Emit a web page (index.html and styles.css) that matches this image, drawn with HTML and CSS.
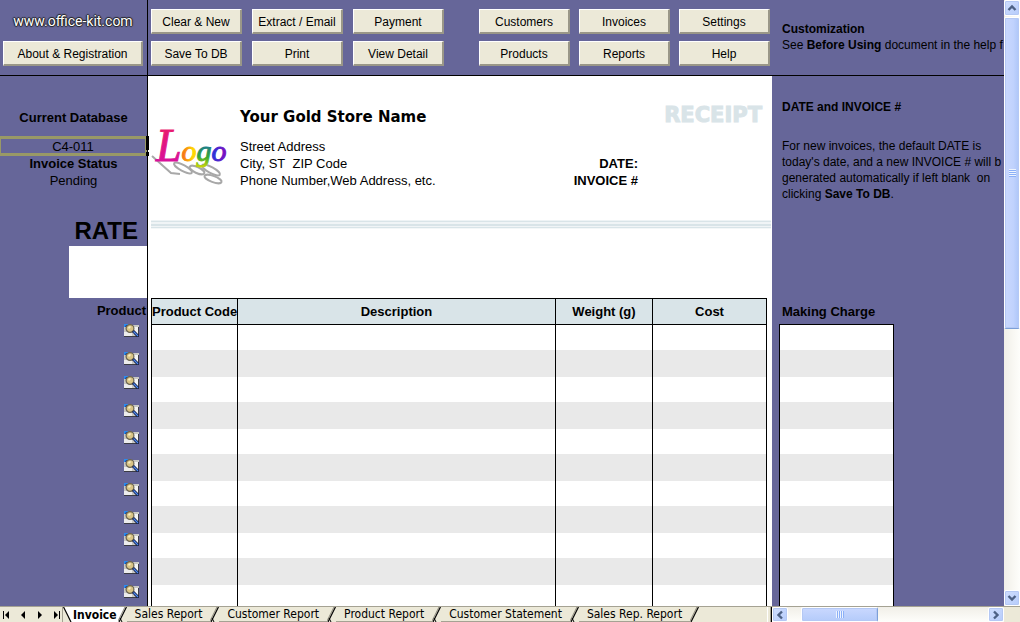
FILE: index.html
```html
<!DOCTYPE html>
<html lang="en">
<head>
<meta charset="utf-8">
<title>Invoice</title>
<link rel="stylesheet" href="styles.css">
</head>
<body>
<svg class="defs" width="0" height="0" aria-hidden="true">
  <symbol id="lookup" viewBox="0 0 15 13">
    <rect x="0" y="1" width="15" height="12" fill="#c8c8c4"/>
    <path d="M0 8h8v5H0z" fill="#ececec"/>
    <path d="M9 3h5v7H9z" fill="#f4f4f4"/>
    <path d="M0 12.500h15M14.500 3v10" stroke="#3c3c44" fill="none"/>
    <path d="M0 0h4v1H2v2H0z" fill="#2a8cf0"/>
    <path d="M2 1h2v2H1z" fill="#123a9a"/>
    <circle cx="6" cy="4.500" r="3.900" fill="#d9c486" stroke="#6a6452" stroke-width="1.200"/>
    <path d="M4 3.500l2-1.500 1 1-2 2z" fill="#f7edc4"/>
    <path d="M9 7l5.500 5.500" stroke="#101840" stroke-width="3"/>
    <path d="M9.500 7.500l4.500 4.500" stroke="#4d8cf0" stroke-width="1.200"/>
  </symbol>
  <symbol id="slash" viewBox="0 0 9 15">
    <path d="M8.500 0L1 15h8V0z" fill="#ece9d8"/>
    <path d="M7 0L0 14" stroke="#8d8a7c" fill="none"/>
    <path d="M8.500 0L1 15" stroke="#000" stroke-width="1.200" fill="none"/>
    <path d="M2 11L4 15" stroke="#000" fill="none"/>
  </symbol>
  <symbol id="chevron" viewBox="0 0 10 10">
    <path d="M1.500 7L5 3.500 8.500 7" fill="none" stroke="#4d6185" stroke-width="2.400"/>
  </symbol>
</svg>

<div class="app">
  <main class="sheet">
    <header class="toolbar">
      <div class="brand">
        <a class="brand-link" href="#">www.office-kit.com</a>
        <button class="btn">About &amp; Registration</button>
      </div>
      <div class="actions">
        <div class="group">
          <button class="btn">Clear &amp; New</button><button class="btn">Extract / Email</button><button class="btn">Payment</button>
          <button class="btn">Save To DB</button><button class="btn">Print</button><button class="btn">View Detail</button>
        </div>
        <div class="group group-nav">
          <button class="btn">Customers</button><button class="btn">Invoices</button><button class="btn">Settings</button>
          <button class="btn">Products</button><button class="btn">Reports</button><button class="btn">Help</button>
        </div>
      </div>
      <div class="hint">
        <b>Customization</b>
        <p>See <b>Before Using</b> document in the help f</p>
      </div>
    </header>

    <div class="content">
      <aside class="side">
        <label class="side-title" for="db">Current Database</label>
        <div class="selected"><input id="db" type="text" value="C4-011"><span class="handle"></span></div>
        <b class="side-title">Invoice Status</b>
        <span class="side-value">Pending</span>
        <label class="rate-label" for="rate">RATE</label>
        <input id="rate" class="rate" type="text">
        <b class="product">Product</b>
        <ul class="lookups">
          <li><button aria-label="Look up product"><svg><use href="#lookup"/></svg></button></li>
          <li><button aria-label="Look up product"><svg><use href="#lookup"/></svg></button></li>
          <li><button aria-label="Look up product"><svg><use href="#lookup"/></svg></button></li>
          <li><button aria-label="Look up product"><svg><use href="#lookup"/></svg></button></li>
          <li><button aria-label="Look up product"><svg><use href="#lookup"/></svg></button></li>
          <li><button aria-label="Look up product"><svg><use href="#lookup"/></svg></button></li>
          <li><button aria-label="Look up product"><svg><use href="#lookup"/></svg></button></li>
          <li><button aria-label="Look up product"><svg><use href="#lookup"/></svg></button></li>
          <li><button aria-label="Look up product"><svg><use href="#lookup"/></svg></button></li>
          <li><button aria-label="Look up product"><svg><use href="#lookup"/></svg></button></li>
          <li><button aria-label="Look up product"><svg><use href="#lookup"/></svg></button></li>
        </ul>
      </aside>

      <section class="invoice">
        <div class="invoice-head">
          <svg class="logo" viewBox="0 0 78 80" role="img" aria-label="Logo">
            <defs>
              <linearGradient id="gl" gradientUnits="userSpaceOnUse" x1="0" y1="8" x2="0" y2="54"><stop offset="0" stop-color="#f0205a"/><stop offset="1" stop-color="#d8109a"/></linearGradient>
              <linearGradient id="go" gradientUnits="userSpaceOnUse" x1="26" y1="0" x2="42" y2="0"><stop offset="0" stop-color="#f03a20"/><stop offset="1" stop-color="#ffd800"/></linearGradient>
              <linearGradient id="gg" gradientUnits="userSpaceOnUse" x1="0" y1="38" x2="0" y2="62"><stop offset="0" stop-color="#1a7898"/><stop offset=".5" stop-color="#35a830"/><stop offset="1" stop-color="#e8e000"/></linearGradient>
              <linearGradient id="gb" gradientUnits="userSpaceOnUse" x1="58" y1="0" x2="74" y2="0"><stop offset="0" stop-color="#1040e0"/><stop offset="1" stop-color="#7a10c0"/></linearGradient>
            </defs>
            <g fill="none" stroke="#a8a8a8" stroke-width="2">
              <path d="M1 49L20 66l9 1"/>
              <ellipse cx="32" cy="61" rx="10" ry="3" transform="rotate(28 32 61)"/>
              <ellipse cx="46" cy="63" rx="8" ry="3" transform="rotate(25 46 63)"/>
              <ellipse cx="60" cy="63" rx="10" ry="3" transform="rotate(28 60 63)"/>
              <ellipse cx="62" cy="72" rx="9" ry="3" transform="rotate(20 62 72)"/>
            </g>
            <text class="logo-text" x="5" y="54"><tspan class="logo-l" fill="url(#gl)" stroke="url(#gl)">L</tspan><tspan fill="url(#go)" stroke="url(#go)">o</tspan><tspan fill="url(#gg)" stroke="url(#gg)">g</tspan><tspan fill="url(#gb)" stroke="url(#gb)">o</tspan></text>
          </svg>
          <div class="store">
            <h1>Your Gold Store Name</h1>
            <p>Street Address<br>City, ST&nbsp; ZIP Code<br>Phone Number,Web Address, etc.</p>
          </div>
          <div class="meta">
            <h2>RECEIPT</h2>
            <p>DATE:<br>INVOICE #</p>
          </div>
        </div>
        <div class="rule"></div>
        <table class="items">
          <colgroup><col class="c-code"><col class="c-desc"><col class="c-weight"><col class="c-cost"></colgroup>
          <thead><tr><th>Product Code</th><th>Description</th><th>Weight (g)</th><th>Cost</th></tr></thead>
          <tbody>
            <tr><td></td><td></td><td></td><td></td></tr>
            <tr><td></td><td></td><td></td><td></td></tr>
            <tr><td></td><td></td><td></td><td></td></tr>
            <tr><td></td><td></td><td></td><td></td></tr>
            <tr><td></td><td></td><td></td><td></td></tr>
            <tr><td></td><td></td><td></td><td></td></tr>
            <tr><td></td><td></td><td></td><td></td></tr>
            <tr><td></td><td></td><td></td><td></td></tr>
            <tr><td></td><td></td><td></td><td></td></tr>
            <tr><td></td><td></td><td></td><td></td></tr>
            <tr><td></td><td></td><td></td><td></td></tr>
          </tbody>
        </table>
      </section>

      <aside class="notes">
        <div class="help">
          <b>DATE and INVOICE #</b>
          <p>For new invoices, the default DATE is<br>today's date, and a new INVOICE # will b<br>generated automatically if left blank&nbsp; on<br>clicking <b>Save To DB</b>.</p>
        </div>
        <table class="items charges">
          <thead><tr><th>Making Charge</th></tr></thead>
          <tbody>
            <tr><td></td></tr><tr><td></td></tr><tr><td></td></tr><tr><td></td></tr><tr><td></td></tr><tr><td></td></tr>
            <tr><td></td></tr><tr><td></td></tr><tr><td></td></tr><tr><td></td></tr><tr><td></td></tr>
          </tbody>
        </table>
      </aside>
    </div>
  </main>

  <div class="vscroll">
    <button class="arrow" aria-label="Scroll up"><svg><use href="#chevron"/></svg></button>
    <div class="vthumb"><span class="grip"></span></div>
    <button class="arrow down" aria-label="Scroll down"><svg><use href="#chevron"/></svg></button>
  </div>

  <footer class="bottom">
    <div class="tabs">
      <div class="tab-nav">
        <button aria-label="First sheet"><svg viewBox="0 0 8 8"><path d="M1 0h1v8H1zM7 0v8L3 4z"/></svg></button>
        <button aria-label="Previous sheet"><svg viewBox="0 0 8 8"><path d="M6 0v8L2 4z"/></svg></button>
        <button aria-label="Next sheet"><svg viewBox="0 0 8 8"><path d="M2 0v8l4-4z"/></svg></button>
        <button aria-label="Last sheet"><svg viewBox="0 0 8 8"><path d="M6 0h1v8H6zM1 0v8l4-4z"/></svg></button>
      </div>
      <svg class="tab-edge" viewBox="0 0 9 15"><path d="M1 0l7.500 15H9V0z" fill="#fff"/><path d="M.5 0L8 15" stroke="#000" stroke-width="1.200"/></svg>
      <button class="tab active">Invoice</button><svg class="slash after-active"><use href="#slash"/></svg>
      <button class="tab">Sales Report</button><svg class="slash"><use href="#slash"/></svg>
      <button class="tab">Customer Report</button><svg class="slash"><use href="#slash"/></svg>
      <button class="tab">Product Report</button><svg class="slash"><use href="#slash"/></svg>
      <button class="tab">Customer Statement</button><svg class="slash"><use href="#slash"/></svg>
      <button class="tab">Sales Rep. Report</button><svg class="slash last" viewBox="0 0 9 15"><path d="M7 0L0 14" stroke="#8d8a7c"/><path d="M8.500 0L1 15" stroke="#000" stroke-width="1.200"/></svg>
      <span class="splitter"></span>
    </div>
    <div class="hscroll">
      <button class="arrow left" aria-label="Scroll left"><svg><use href="#chevron"/></svg></button>
      <div class="hthumb"><span class="grip"></span></div>
      <button class="arrow right" aria-label="Scroll right"><svg><use href="#chevron"/></svg></button>
    </div>
  </footer>
</div>
</body>
</html>
```
FILE: styles.css
```css
* { box-sizing: border-box; }
body {
  margin: 0;
  font-family: "Liberation Sans", Arial, sans-serif;
  font-size: 13px;
  line-height: 16px;
  color: #000;
  background: #666699;
}
h1, h2, p, ul { margin: 0; padding: 0; }
ul { list-style: none; }
button, input { font: inherit; color: inherit; border: 0; padding: 0; margin: 0; background: none; }
.defs { position: absolute; }

.app {
  display: grid;
  grid-template-columns: minmax(0, 1fr) 16px;
  grid-template-rows: minmax(0, 1fr) 16px;
  height: 100vh;
}
.sheet { display: flex; flex-direction: column; overflow: hidden; }

.toolbar, .content { display: grid; grid-template-columns: 148px 624px minmax(0, 1fr); }
.toolbar { flex: none; height: 76px; border-bottom: 1px solid #000; }
.content { flex: 1; min-height: 0; }

.brand {
  display: flex;
  flex-direction: column;
  gap: 8px;
  padding: 9px 4px 0 3px;
  border-right: 1px solid #000;
}
.brand-link {
  height: 24px;
  line-height: 24px;
  text-align: center;
  font-family: Roboto, sans-serif;
  font-size: 14px;
  color: #fff;
  text-decoration: none;
  text-shadow: 1px 0 1px #222, -1px 0 1px #222, 0 1px 1px #222, 0 -1px 1px #222;
}
.btn {
  height: 25px;
  padding-top: 2px;
  background: #ece9d8;
  border: solid;
  border-width: 1px 2px 2px 1px;
  border-color: #fff #9a9788 #9a9788 #fff;
  font-size: 12px;
  line-height: 20px;
  white-space: nowrap;
}
.actions { display: flex; gap: 35px; padding: 9px 0 0 3px; }
.group { display: grid; grid-template-columns: repeat(3, 91px); gap: 7px 10px; align-content: start; }
.group-nav { column-gap: 9px; }
.hint { padding: 21px 0 0 10px; font-size: 12px; white-space: nowrap; overflow: hidden; }

.side {
  display: flex;
  flex-direction: column;
  align-items: center;
  padding-top: 34px;
  border-right: 1px solid #000;
}
.side > * { flex: none; }
.side-title { font-weight: bold; }
label.side-title { margin-bottom: 10px; }
.selected { position: relative; align-self: stretch; height: 20px; }
.selected input {
  display: block;
  width: 100%;
  height: 20px;
  border: solid #999966;
  border-width: 3px 2px 3px 1px;
  text-align: center;
}
.handle {
  position: absolute;
  z-index: 1;
  right: -2px;
  bottom: 0;
  width: 3px;
  height: 20px;
  background: linear-gradient(#000 14px, transparent 14px 16px, #000 16px);
}
.side-value { line-height: 18px; }
.rate-label { align-self: flex-end; margin: 27px 9px 0 0; font-size: 24px; line-height: 28px; font-weight: bold; }
.rate { align-self: flex-end; width: 78px; height: 52px; margin-top: 1px; background: #fff; }
.product { align-self: flex-end; padding-right: 1px; line-height: 26px; }
.lookups { align-self: flex-end; padding-right: 8px; }
.lookups li { height: 28px; }
.lookups li:nth-child(even) { height: 24px; }
.lookups li:nth-child(4) { height: 27px; }
.lookups li:nth-child(8) { height: 22px; }
.lookups button, .lookups svg { display: block; width: 15px; height: 13px; }

.invoice { padding-left: 3px; background: #fff; }
.invoice-head {
  display: grid;
  grid-template-columns: 89px 1fr auto;
  height: 144px;
  padding: 27px 10px 0 0;
}
.logo { width: 78px; height: 80px; margin-top: 4px; }
.logo-text { font-family: "Liberation Serif", serif; font-style: italic; font-size: 30px; stroke-width: 1px; }
.logo-l { font-size: 46px; }
.store h1 { margin-top: 5px; font-family: "DejaVu Sans", sans-serif; font-size: 15px; font-weight: bold; line-height: 18px; }
.store p { margin-top: 12px; line-height: 17px; }
.meta { text-align: right; }
.meta h2 { font-family: "DejaVu Sans", sans-serif; font-size: 21px; font-weight: bold; line-height: 24px; color: #d9e4e8; -webkit-text-stroke: 1px #d9e4e8; }
.meta p { margin: 28px 124px 0 0; font-weight: bold; line-height: 17px; }
.rule {
  height: 9px;
  margin: 0 1px 69px 0;
  background: linear-gradient(#eef3f5 1px, #d9e4e8 1px 2px, #f0f4f6 2px 4px, #d9e4e8 4px 6px, #f0f4f6 6px 7px, #d9e4e8 7px 8px, #f4f7f8 8px);
}

.items { width: 616px; table-layout: fixed; border-collapse: separate; border-spacing: 0; border-left: 1px solid #000; }
.items th { height: 27px; padding: 0; background: #d9e4e8; border: solid #000; border-width: 1px 1px 1px 0; white-space: nowrap; }
.items td { height: 25px; padding: 0; background: #fff; border-right: 1px solid #000; }
.items tr:nth-child(even) td { height: 27px; background: #e9e9e9; }
.c-code { width: 86px; }
.c-weight { width: 97px; }
.c-cost { width: 114px; }

.notes { overflow: hidden; padding-left: 7px; }
.help { height: 222px; padding: 23px 0 0 3px; font-size: 12px; white-space: nowrap; }
.help p { margin-top: 23px; }
.charges { width: 115px; border-left: 0; }
.charges th { padding: 1px 0 0 3px; text-align: left; background: none; border-width: 0 0 1px; }
.charges td { border-left: 1px solid #000; }

.vscroll { display: flex; flex-direction: column; background: linear-gradient(90deg, #f1efe8, #fefefb); }
.hscroll { display: flex; flex: 1; margin-right: 16px; background: linear-gradient(#f1efe8, #fefefb); }
.arrow, .vthumb, .hthumb {
  display: flex;
  align-items: center;
  justify-content: center;
  flex: none;
  border: 1px solid #fff;
  border-radius: 2px;
  background: linear-gradient(135deg, #d0defe, #b6ccfb);
  box-shadow: inset 0 0 0 1px #b4c8f4;
}
.arrow { width: 16px; height: 16px; }
.arrow svg { width: 10px; height: 10px; }
.down { margin-top: auto; }
.down svg { transform: rotate(180deg); }
.left svg { transform: rotate(-90deg); }
.right svg { transform: rotate(90deg); }
.hscroll .arrow { height: 15px; }
.right { margin-left: auto; }
.vthumb { height: 312px; margin-top: 1px; background: linear-gradient(90deg, #cad8fe, #c0d2fd 60%, #adc6f8); border-bottom-color: #7c9fd8; }
.hthumb { width: 77px; margin-left: 13px; background: linear-gradient(#cad8fe, #b4cbfa); border-right-color: #7c9fd8; }
.vthumb .grip { width: 7px; height: 8px; background: repeating-linear-gradient(#eef4fe 0 1px, #8cb0f8 1px 2px); }
.hthumb .grip { width: 8px; height: 7px; background: repeating-linear-gradient(90deg, #eef4fe 0 1px, #8cb0f8 1px 2px); }

.bottom { grid-column: 1 / -1; display: flex; background: #ece9d8; border-top: 1px solid #a5a293; }
.tabs { display: flex; flex: none; width: 772px; border-right: 1px solid #000; }
.tab-nav { display: flex; align-items: center; gap: 9px; width: 63px; padding-left: 2px; border-right: 1px solid #a5a293; flex: none; }
.tab-nav button, .tab-nav svg { display: block; width: 8px; height: 8px; }
.tab-edge, .slash { display: block; flex: none; width: 9px; height: 15px; }
.tab {
  height: 15px;
  padding: 1px 8px 0;
  border-bottom: 1px solid #a5a293;
  font-family: "DejaVu Sans Condensed", "DejaVu Sans", sans-serif;
  font-size: 12px;
  line-height: 13px;
  white-space: nowrap;
}
.tab.active { padding: 1px 1px 0; font-weight: bold; background: #fff; border-bottom: 0; }
.after-active { background: #fff; }
.last { fill: none; }
.splitter { width: 4px; margin-left: auto; border: solid #fff; border-width: 0 1px; border-right-color: #a5a293; }
```
